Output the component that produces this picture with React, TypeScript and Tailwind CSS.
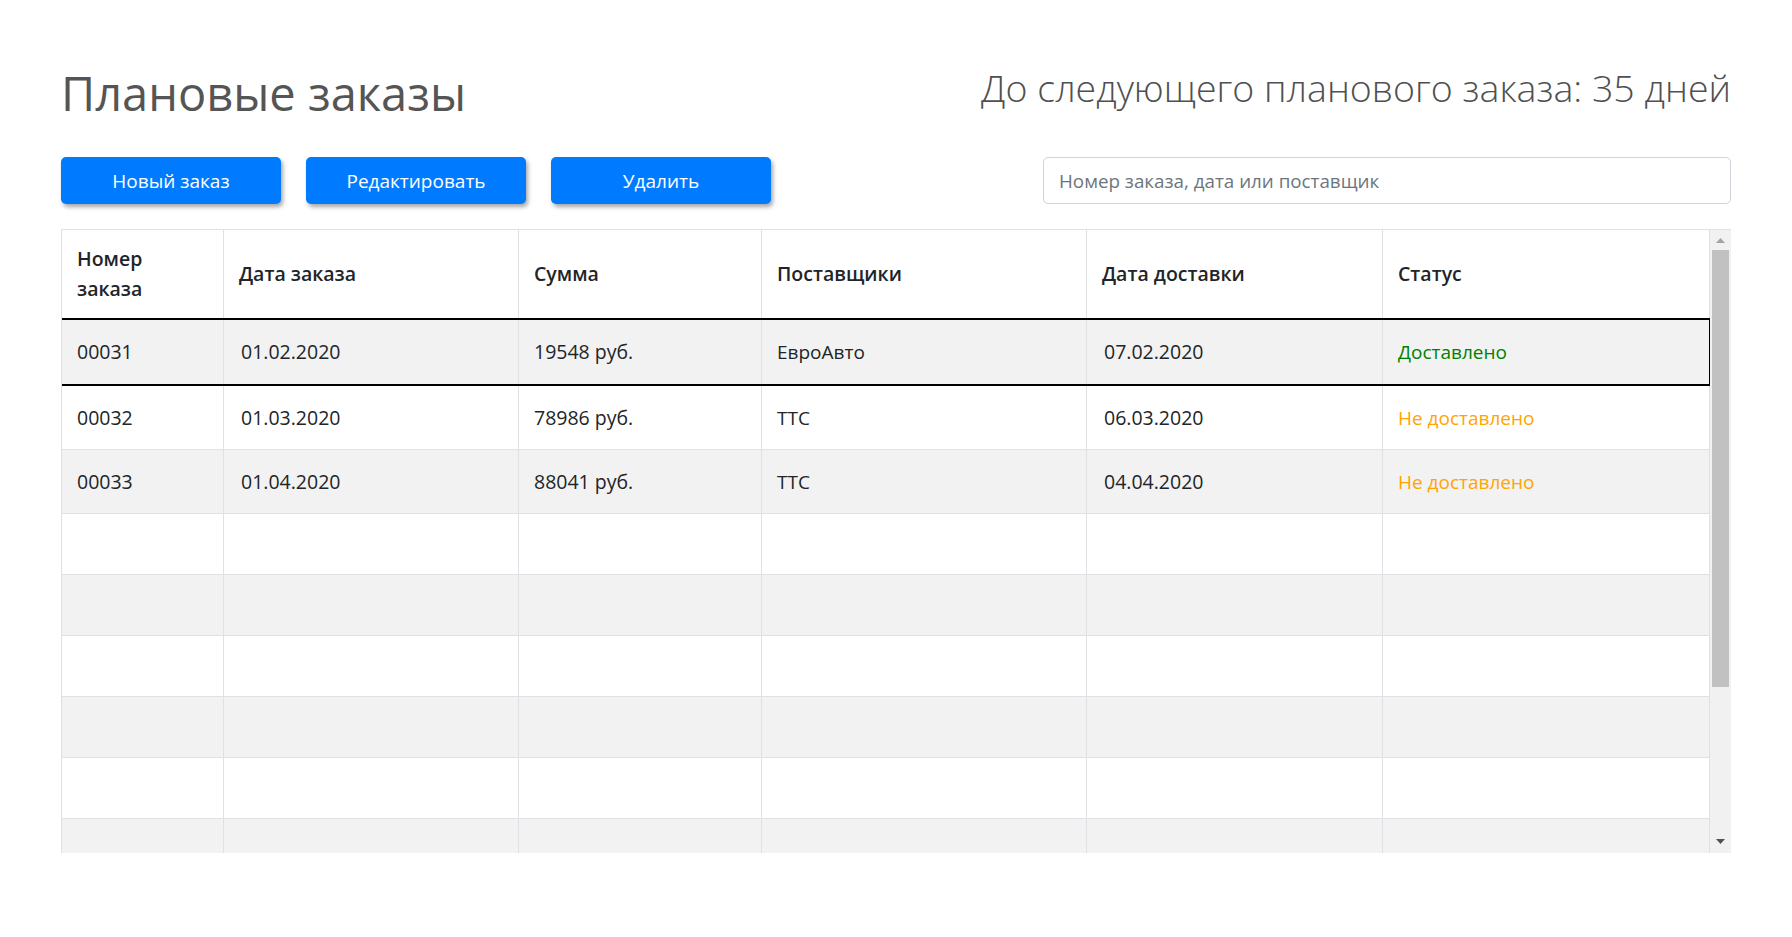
import React from 'react';

type Order = {
  id: string;
  date: string;
  sum: string;
  supplier: string;
  delivery: string;
  delivered: boolean;
};

const orders: Order[] = [
  { id: '00031', date: '01.02.2020', sum: '19548 руб.', supplier: 'ЕвроАвто', delivery: '07.02.2020', delivered: true },
  { id: '00032', date: '01.03.2020', sum: '78986 руб.', supplier: 'ТТС', delivery: '06.03.2020', delivered: false },
  { id: '00033', date: '01.04.2020', sum: '88041 руб.', supplier: 'ТТС', delivery: '04.04.2020', delivered: false },
];

const gridCols = 'grid grid-cols-[162px_295px_243px_325px_296px_327px]';
const cell = 'flex items-center px-[15px] border-r border-[#dee2e6]';

const App: React.FC = () => {
  const emptyRows = [0, 1, 2, 3, 4, 5];

  return (
    <div className="min-h-screen bg-white px-[61px] pt-[63px] font-['Open_Sans','Noto_Sans',sans-serif] text-[#212529]">
      {/* Header */}
      <div className="flex items-start justify-between">
        <h1 className="text-[47px] leading-[60px] font-normal text-[#555555]">Плановые заказы</h1>
        <h2 className="mt-[1px] text-[37.5px] leading-[48px] font-light text-[#505050]">
          До следующего планового заказа: 35 дней
        </h2>
      </div>

      {/* Toolbar */}
      <div className="mt-[34px] flex items-center justify-between">
        <div className="flex gap-[25px]">
          {['Новый заказ', 'Редактировать', 'Удалить'].map(label => (
            <button
              key={label}
              type="button"
              className="h-[47px] w-[220px] rounded-[5px] bg-[#007bff] text-[19px] leading-[30px] text-white shadow-[2px_3px_4px_rgba(0,0,0,0.35)]"
            >
              {label}
            </button>
          ))}
        </div>
        <input
          type="text"
          placeholder="Номер заказа, дата или поставщик"
          className="h-[47px] w-[688px] rounded-[5px] border border-[#ced4da] px-[15px] text-[18.8px] text-[#495057] outline-none placeholder:text-[#6c757d]"
        />
      </div>

      {/* Table */}
      <div className="mt-[25px] flex h-[624px] overflow-hidden border-t border-l border-[#dee2e6]">
        <div className="w-[1648px] shrink-0 text-[19.5px] leading-[30px]">
          <div className={`${gridCols} h-[90px] border-b-2 border-black font-semibold text-[19.5px]`}>
            <div className={cell}>Номер заказа</div>
            <div className={cell}>Дата заказа</div>
            <div className={cell}>Сумма</div>
            <div className={cell}>Поставщики</div>
            <div className={cell}>Дата доставки</div>
            <div className={cell}>Статус</div>
          </div>

          {orders.map((o, i) => {
            const selected = i === 0;
            const rowCls = selected
              ? 'h-[66px] border-b-2 border-black bg-[#f2f2f2]'
              : `h-[64px] border-b border-[#dee2e6] ${i % 2 === 0 ? 'bg-[#f2f2f2]' : 'bg-white'}`;
            return (
              <div key={o.id} className={`${gridCols} ${rowCls}`}>
                <div className={cell}>{o.id}</div>
                <div className={`${cell} pl-[17px]`}>{o.date}</div>
                <div className={cell}>{o.sum}</div>
                <div className={`${cell} text-[19px]`}>{o.supplier}</div>
                <div className={`${cell} pl-[17px]`}>{o.delivery}</div>
                <div className={`${cell} text-[19px] ${selected ? 'border-r-black' : ''}`}>
                  <span className={o.delivered ? 'text-[#008000]' : 'text-[#ffa500]'}>
                    {o.delivered ? 'Доставлено' : 'Не доставлено'}
                  </span>
                </div>
              </div>
            );
          })}

          {emptyRows.map(r => (
            <div
              key={r}
              className={`${gridCols} h-[61px] border-b border-[#dee2e6] ${r % 2 === 0 ? 'bg-white' : 'bg-[#f2f2f2]'}`}
            >
              <div className={cell} />
              <div className={cell} />
              <div className={cell} />
              <div className={cell} />
              <div className={cell} />
              <div className={cell} />
            </div>
          ))}
        </div>

        {/* Scrollbar */}
        <div className="flex w-[21px] shrink-0 flex-col bg-[#f1f1f1]">
          <div className="flex h-[20px] items-center justify-center">
            <svg width="9" height="5" viewBox="0 0 9 5">
              <polygon points="4.5,0 9,5 0,5" fill="#a3a3a3" />
            </svg>
          </div>
          <div className="mx-[2px] h-[437px] bg-[#c1c1c1]" />
          <div className="flex-1" />
          <div className="flex h-[24px] items-center justify-center">
            <svg width="9" height="5" viewBox="0 0 9 5">
              <polygon points="0,0 9,0 4.5,5" fill="#505050" />
            </svg>
          </div>
        </div>
      </div>
    </div>
  );
};

export default App;
